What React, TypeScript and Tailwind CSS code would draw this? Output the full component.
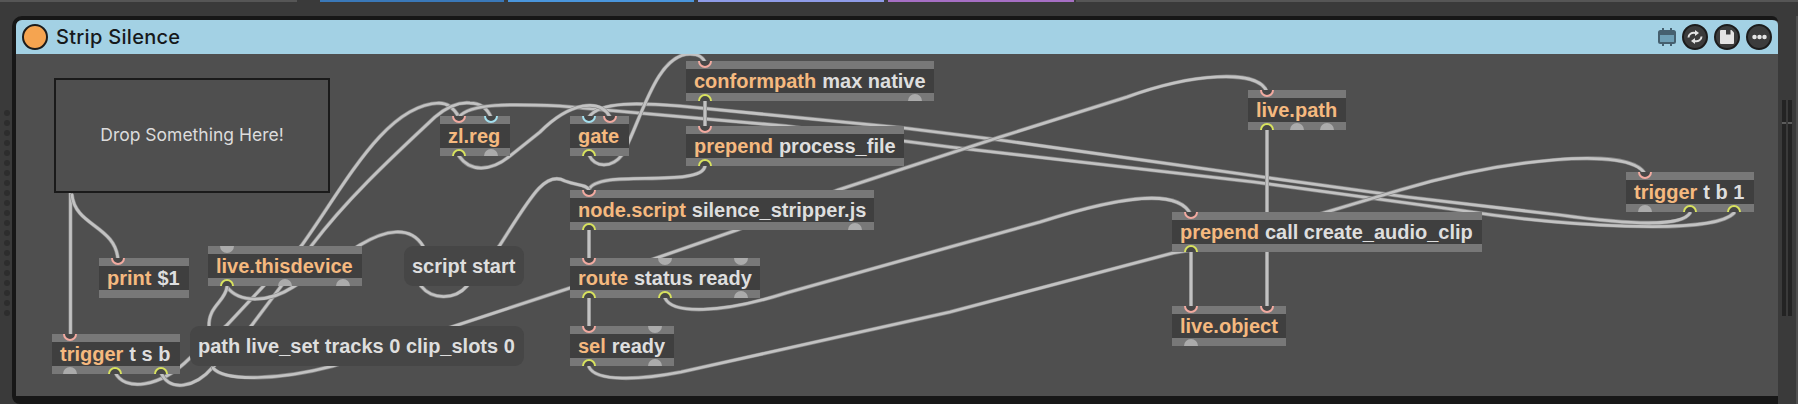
import React from "react";

type Port = { x: number; kind: "in" | "cold" | "out" | "off" };

type Obj = {
  left: number;
  top: number;
  width: number;
  name: string;
  args?: string;
  inlets: Port[];
  outlets: Port[];
};

const p = (x: number, kind: Port["kind"]): Port => ({ x, kind });

const objects: Obj[] = [
  { left: 99, top: 258, width: 90, name: "print", args: "$1", inlets: [p(118, "in")], outlets: [] },
  { left: 208, top: 246, width: 154, name: "live.thisdevice", inlets: [p(227, "off")], outlets: [p(227, "out"), p(285, "off"), p(343, "off")] },
  { left: 52, top: 334, width: 128, name: "trigger", args: "t s b", inlets: [p(70, "in")], outlets: [p(70, "off"), p(115, "out"), p(161, "out")] },
  { left: 440, top: 116, width: 70, name: "zl.reg", inlets: [p(459, "in"), p(491, "cold")], outlets: [p(459, "out"), p(491, "off")] },
  { left: 570, top: 116, width: 59, name: "gate", inlets: [p(589, "cold"), p(610, "in")], outlets: [p(589, "out")] },
  { left: 686, top: 61, width: 248, name: "conformpath", args: "max native", inlets: [p(705, "in")], outlets: [p(705, "out"), p(915, "off")] },
  { left: 686, top: 126, width: 218, name: "prepend", args: "process_file", inlets: [p(705, "in")], outlets: [p(705, "out")] },
  { left: 570, top: 190, width: 304, name: "node.script", args: "silence_stripper.js", inlets: [p(589, "in")], outlets: [p(589, "out"), p(855, "off")] },
  { left: 570, top: 258, width: 190, name: "route", args: "status ready", inlets: [p(589, "in"), p(665, "off"), p(741, "off")], outlets: [p(589, "out"), p(665, "out"), p(741, "off")] },
  { left: 570, top: 326, width: 104, name: "sel", args: "ready", inlets: [p(589, "in"), p(655, "off")], outlets: [p(589, "out"), p(655, "off")] },
  { left: 1248, top: 90, width: 98, name: "live.path", inlets: [p(1267, "in")], outlets: [p(1267, "out"), p(1297, "off"), p(1327, "off")] },
  { left: 1626, top: 172, width: 128, name: "trigger", args: "t b 1", inlets: [p(1645, "in")], outlets: [p(1645, "off"), p(1690, "out"), p(1734, "out")] },
  { left: 1172, top: 212, width: 310, name: "prepend", args: "call create_audio_clip", inlets: [p(1191, "in")], outlets: [p(1191, "out")] },
  { left: 1172, top: 306, width: 114, name: "live.object", inlets: [p(1191, "in"), p(1267, "in")], outlets: [p(1191, "off")] },
];

const messages = [
  { left: 404, top: 246, width: 120, text: "script start" },
  { left: 190, top: 326, width: 334, text: "path live_set tracks 0 clip_slots 0" },
];

const cables = [
  "M70.5 193 L70.5 336",
  "M72 195 C75 226 116 226 118 260",
  "M115 372 C124 392 160 388 190 358 L227 325 L302 245 C345 185 385 105 439 103 C448 103 454 108 459 117",
  "M161 373 C170 392 195 388 213 367 L252 325 L312 245 C350 195 400 150 435 117 C448 106 460 102 470 103 C480 103 487 108 491 117",
  "M459 117 C470 103 510 104 560 106 L786 126 L950 147 L1254 182 L1458 210 C1560 226 1712 236 1734 213",
  "M589 117 C600 101 640 103 680 106 L904 128 L1000 140 L1270 178 L1407 197 L1560 215 C1640 226 1682 226 1690 213",
  "M459 156 C470 172 490 172 510 156 L540 132 C570 102 600 98 610 117",
  "M589 155 C595 168 612 168 622 155 C640 125 655 54 690 54 C700 54 703 58 705 62",
  "M705 101 L705 128",
  "M705 166 C703 183 640 176 610 180 C596 182 590 186 589 190",
  "M227 287 C240 304 270 302 293 287 L360 245 C385 230 410 225 423 246",
  "M227 287 C225 302 208 306 209 327",
  "M421 286 C432 300 455 300 467 286 L500 245 C530 198 545 170 565 181 C578 186 586 184 589 190",
  "M213 368 C225 382 280 380 333 366 L570 288 L737 230 L838 190 L1000 137 L1127 97 C1190 74 1258 68 1267 92",
  "M589 230 L589 260",
  "M589 298 L589 328",
  "M665 298 C672 314 720 314 786 293 L950 247 L1040 222 C1130 193 1180 190 1191 215",
  "M589 367 C596 382 640 380 681 372 L950 312 L1173 253 L1191 250",
  "M1191 252 L1191 308",
  "M1267 130 L1267 308",
  "M1320 214 L1400 190 C1500 160 1630 145 1645 174",
];

const portColor = {
  in: "border-[#f2aaa0] bg-[#474747]",
  cold: "border-[#a3e0ef] bg-[#474747]",
  out: "border-[#d8e25e] bg-[#474747]",
  off: "border-[#ababab] bg-[#ababab]",
};

const PortDot = ({ port, left, edge }: { port: Port; left: number; edge: "top" | "bottom" }) => (
  <span
    className={`absolute h-[14px] w-[14px] rounded-full border-2 ${portColor[port.kind]} ${
      edge === "top" ? "top-[-7px]" : "bottom-[-7px]"
    }`}
    style={{ left: port.x - left - 7 }}
  />
);

const MaxObject = ({ obj }: { obj: Obj }) => (
  <div
    className="absolute flex h-[40px] flex-col overflow-hidden"
    style={{ left: obj.left - 16, top: obj.top - 54, width: obj.width }}
  >
    <div className="relative h-[8px] bg-[#787878]">
      {obj.inlets.map((port) => (
        <PortDot key={port.x} port={port} left={obj.left} edge="top" />
      ))}
    </div>
    <div className="flex h-[24px] items-center gap-[6px] whitespace-nowrap bg-[#3f3f3f] pl-[8px] text-[20px] font-bold">
      <span className="text-[#f5b97f]">{obj.name}</span>
      {obj.args && <span className="text-[#dedede]">{obj.args}</span>}
    </div>
    <div className="relative h-[8px] bg-[#787878]">
      {obj.outlets.map((port) => (
        <PortDot key={port.x} port={port} left={obj.left} edge="bottom" />
      ))}
    </div>
  </div>
);

const TitleButton = ({ children }: { children: React.ReactNode }) => (
  <div className="flex h-[26px] w-[26px] items-center justify-center rounded-full border-2 border-[#1c1c1c] bg-[#3c3c3c]">
    {children}
  </div>
);

const grips = Array.from({ length: 21 }, (_, i) => i);

export default function App() {
  return (
    <div className="flex h-[404px] w-[1798px] flex-col overflow-hidden bg-[#3a3a3a] font-['Liberation_Sans',sans-serif]">
      {/* Clip colours along the top */}
      <div className="flex h-[2px] shrink-0">
        <div className="h-full w-[297px] bg-[#565656]" />
        <div className="ml-[23px] h-full w-[184px] bg-[#3a78b8]" />
        <div className="ml-[4px] h-full w-[186px] bg-[#4a96dc]" />
        <div className="ml-[4px] h-full w-[186px] bg-[#8f9ce8]" />
        <div className="ml-[4px] h-full w-[186px] bg-[#a66fc4]" />
        <div className="ml-[2px] h-full flex-1 bg-[#565656]" />
      </div>

      <div className="flex min-h-0 flex-1 pt-[14px]">
        {/* Left drag grip */}
        <div className="flex w-[12px] shrink-0 flex-col items-center gap-[4px] pt-[94px] pl-[2px]">
          {grips.map((i) => (
            <span key={i} className="h-[6px] w-[6px] rounded-full bg-[#2d2d2d]" />
          ))}
        </div>

        {/* Device */}
        <div className="flex w-[1766px] shrink-0 flex-col overflow-hidden rounded-tl-[10px] rounded-tr-[6px] rounded-bl-[8px] border-t-4 border-b-[8px] border-l-4 border-[#171717] border-r-0 bg-[#4f4f4f]">
          <div className="z-10 flex h-[34px] shrink-0 items-center rounded-tr-[5px] bg-[#a3d1e4] pl-[6px] pr-[6px]">
            <span className="h-[26px] w-[26px] rounded-full border-2 border-[#1c1c1c] bg-[#f5a450]" />
            <span className="ml-[8px] font-['Inter',sans-serif] text-[20px] font-medium tracking-[0.3px] text-[#16191b]">
              Strip Silence
            </span>
            <div className="ml-auto flex items-center gap-[6px]">
              <svg width="18" height="18" viewBox="0 0 18 18">
                <rect x="1" y="3" width="16" height="12" rx="1.5" fill="#6f9fb5" stroke="#46606f" strokeWidth="2" />
                <rect x="1" y="3" width="16" height="4" fill="#46606f" />
                <path d="M5 0v3M13 0v3M5 15v3M13 15v3" stroke="#46606f" strokeWidth="2" />
              </svg>
              <TitleButton>
                <svg width="16" height="16" viewBox="0 0 16 16" fill="none" stroke="#e4e4e4" strokeWidth="2">
                  <path d="M1.5 8.5C1.5 5.5 4.5 3 8.5 4" />
                  <path d="M14.5 7.5C14.5 10.5 11.5 13 7.5 12" />
                  <path d="M8 1l4 3-4 3z" fill="#e4e4e4" stroke="none" />
                  <path d="M8 9l-4 3 4 3z" fill="#e4e4e4" stroke="none" />
                </svg>
              </TitleButton>
              <TitleButton>
                <svg width="14" height="14" viewBox="0 0 14 14">
                  <path d="M0 1a1 1 0 0 1 1-1h10.5L14 2.5V13a1 1 0 0 1-1 1H1a1 1 0 0 1-1-1z" fill="#e4e4e4" />
                  <rect x="6" y="0" width="4.5" height="4.5" fill="#3c3c3c" />
                </svg>
              </TitleButton>
              <TitleButton>
                <svg width="15" height="6" viewBox="0 0 15 6" fill="#e4e4e4">
                  <circle cx="2.5" cy="3" r="2.25" />
                  <circle cx="7.5" cy="3" r="2.25" />
                  <circle cx="12.5" cy="3" r="2.25" />
                </svg>
              </TitleButton>
            </div>
          </div>

          {/* Patcher canvas */}
          <div className="relative min-h-0 flex-1">
            <svg
              width="1762"
              height="342"
              viewBox="16 54 1762 342"
              fill="none"
              className="absolute left-0 top-0"
            >
              {cables.map((d) => (
                <g key={d}>
                  <path d={d} stroke="#858585" strokeWidth="4" strokeLinecap="round" />
                  <path d={d} stroke="#c2c2c2" strokeWidth="2.75" strokeLinecap="round" />
                </g>
              ))}
            </svg>

            <div className="absolute left-[38px] top-[24px] flex h-[115px] w-[276px] items-center justify-center border-2 border-[#1a1a1a] bg-[#4f4f4f] font-['Inter',sans-serif] text-[17.5px] text-[#dcdcdc]">
              Drop Something Here!
            </div>

            {objects.map((obj) => (
              <MaxObject key={`${obj.name}-${obj.left}`} obj={obj} />
            ))}

            {messages.map((m) => (
              <div
                key={m.text}
                className="absolute flex h-[40px] items-center rounded-[9px] bg-[#464646] pl-[8px] text-[20px] font-bold whitespace-nowrap text-[#dedede]"
                style={{ left: m.left - 16, top: m.top - 54, width: m.width }}
              >
                {m.text}
              </div>
            ))}
          </div>
        </div>

        {/* Right side rack scroll */}
        <div className="flex w-[18px] shrink-0 gap-[2px] pt-[84px] pl-[4px]">
          {[0, 1].map((i) => (
            <div key={i} className="flex h-[216px] w-[4px] flex-col">
              <div className="h-[22px] bg-[#232323]" />
              <div className="h-[2px] bg-[#5c5c5c]" />
              <div className="flex-1 bg-[#232323]" />
            </div>
          ))}
        </div>
        <div className="flex-1 bg-[#505050]" />
      </div>
    </div>
  );
}
